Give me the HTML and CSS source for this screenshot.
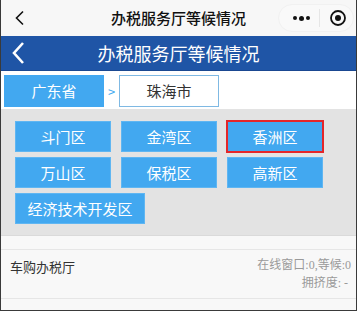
FILE: index.html
```html
<!DOCTYPE html>
<html lang="zh-CN">
<head>
  <meta charset="UTF-8">
  <title>办税服务厅等候情况</title>
  <link rel="stylesheet" href="styles.css">
</head>
<body>
<div class="page">

  <div class="topbar">
    <svg class="top-back" width="12" height="16" viewBox="0 0 12 16">
      <path d="M9 1.5 L2.5 8 L9 14.5" fill="none" stroke="#111" stroke-width="1.6"/>
    </svg>
    <div class="top-title">办税服务厅等候情况</div>
    <div class="capsule">
      <span class="dots"><i></i><i class="big"></i><i></i></span>
      <span class="cap-line"></span>
      <svg width="18" height="18" viewBox="0 0 18 18">
        <circle cx="9" cy="9" r="7" fill="none" stroke="#111" stroke-width="1.8"/>
        <circle cx="9" cy="9" r="3" fill="#111"/>
      </svg>
    </div>
  </div>

  <header class="header">
    <svg class="back" width="14" height="24" viewBox="0 0 14 24">
      <path d="M12 2 L3 12 L12 22" fill="none" stroke="#fff" stroke-width="2.6"/>
    </svg>
    <h1>办税服务厅等候情况</h1>
  </header>

  <div class="crumbs">
    <div class="crumb active">广东省</div>
    <span class="sep">&gt;</span>
    <div class="crumb">珠海市</div>
  </div>

  <div class="areas">
    <div class="area">斗门区</div>
    <div class="area">金湾区</div>
    <div class="area selected">香洲区</div>
    <div class="area">万山区</div>
    <div class="area">保税区</div>
    <div class="area">高新区</div>
    <div class="area wide">经济技术开发区</div>
  </div>

  <div class="list">
    <div class="hall">
      <div class="hall-name">车购办税厅</div>
      <div class="hall-info">
        <div>在线窗口:0,等候:0</div>
        <div>拥挤度: -</div>
      </div>
    </div>
  </div>

</div>
</body>
</html>
```

FILE: styles.css
```css
* {
  box-sizing: border-box;
}

body {
  margin: 0;
  font-family: "Noto Sans CJK SC", "Noto Sans", sans-serif;
}

.page {
  width: 357px;
  height: 311px;
  overflow: hidden;
  background: #f8f8f8;
  border: 1px solid #3a3a3a;
  border-top: none;
}

/* mini program top bar */
.topbar {
  height: 36px;
  background: #f7f7f7;
  display: flex;
  align-items: center;
  position: relative;
}

.top-back {
  margin-left: 13px;
}

.top-title {
  position: absolute;
  left: 0;
  right: 0;
  text-align: center;
  font-size: 15px;
  font-weight: 500;
  color: #111;
  line-height: 36px;
  pointer-events: none;
}

.capsule {
  margin-left: auto;
  margin-right: 2px;
  width: 76px;
  height: 28px;
  border-radius: 14px;
  display: flex;
  align-items: center;
  justify-content: space-between;
  padding: 0 6px 0 14px;
  background: #f9f9f9;
  border: 1px solid #f1f1f1;
}

.dots {
  display: flex;
  align-items: center;
  gap: 2px;
}

.dots i {
  display: block;
  width: 4px;
  height: 4px;
  border-radius: 50%;
  background: #111;
}

.dots i.big {
  width: 5px;
  height: 5px;
}

.cap-line {
  width: 1px;
  height: 18px;
  background: #e6e6e6;
}

/* blue header */
.header {
  height: 35px;
  background: #1f55a6;
  display: flex;
  align-items: center;
  position: relative;
  border-bottom: 1px solid #1a4891;
}

.header .back {
  margin-left: 10px;
}

.header h1 {
  position: absolute;
  left: 0;
  right: 0;
  margin: 0;
  text-align: center;
  font-size: 18px;
  font-weight: 400;
  color: #fff;
  line-height: 34px;
}

/* breadcrumb */
.crumbs {
  display: flex;
  align-items: center;
  background: #fff;
  padding: 4px 3px 2px;
}

.crumb {
  width: 100px;
  height: 32px;
  line-height: 30px;
  text-align: center;
  font-size: 15px;
  color: #333;
  border: 1px solid #7fb9e3;
  background: #fff;
}

.crumb.active {
  background: #42a8f0;
  border-color: #42a8f0;
  color: #fff;
}

.sep {
  width: 15px;
  text-align: center;
  color: #42a8f0;
  font-size: 13px;
}

/* district buttons */
.areas {
  background: #e3e3e3;
  display: grid;
  grid-template-columns: 96px 96px 96px;
  column-gap: 10px;
  row-gap: 5px;
  padding: 12px 0 11px 14px;
  border-bottom: 1px solid #dadada;
}

.area {
  height: 31px;
  line-height: 31px;
  text-align: center;
  background: #42a8f0;
  color: #fff;
  font-size: 15px;
  box-shadow: 0 0 0 1px #5fb6f2 inset;
}

.area.selected {
  outline: 2px solid #e4262a;
  outline-offset: -1px;
}

.area.wide {
  width: 130px;
}

/* halls */
.list {
  margin-top: 13px;
  border-top: 1px solid #e6e6e6;
}

.hall {
  display: flex;
  justify-content: space-between;
  align-items: center;
  height: 49px;
  padding: 0 5px 0 9px;
  border-bottom: 1px solid #e6e6e6;
}

.hall-name {
  font-size: 13px;
  color: #333;
  margin-top: -15px;
}

.hall-info {
  text-align: right;
  font-size: 12px;
  line-height: 18px;
  color: #9a9a9a;
  font-family: "Liberation Serif", "Noto Sans CJK SC", serif;
}

.hall-info div:last-child {
  padding-right: 3px;
}
```
